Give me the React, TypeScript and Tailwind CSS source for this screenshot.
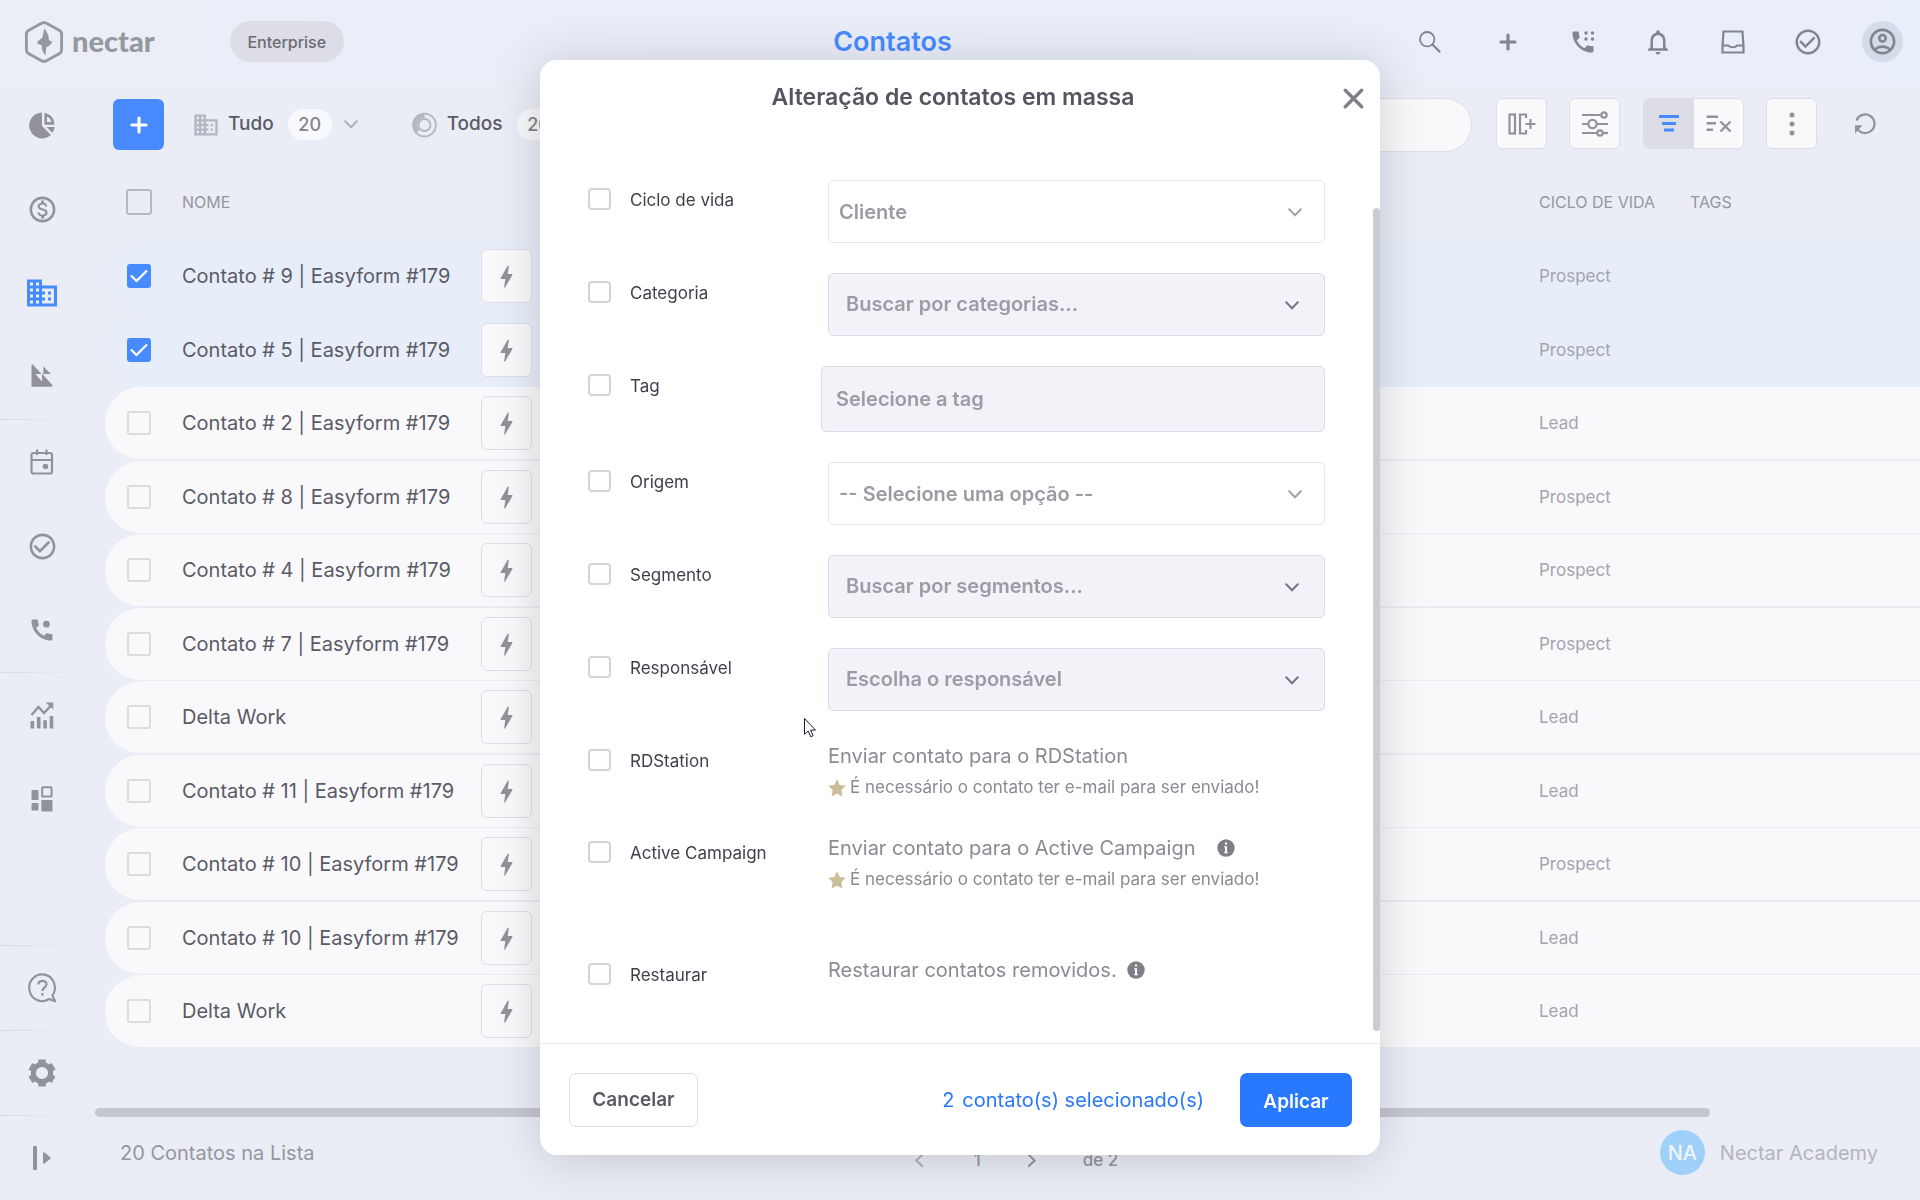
import React from 'react';
import {
  MdBolt,
  MdCheckCircleOutline,
  MdDomain,
  MdNotificationsNone,
  MdOutlineAccountCircle,
  MdOutlineMonetizationOn,
  MdPhone,
} from 'react-icons/md';

type Contact = { name: string; stage: string; selected?: boolean };

const contacts: Contact[] = [
  { name: 'Contato # 9 | Easyform #179', stage: 'Prospect', selected: true },
  { name: 'Contato # 5 | Easyform #179', stage: 'Prospect', selected: true },
  { name: 'Contato # 2 | Easyform #179', stage: 'Lead' },
  { name: 'Contato # 8 | Easyform #179', stage: 'Prospect' },
  { name: 'Contato # 4 | Easyform #179', stage: 'Prospect' },
  { name: 'Contato # 7 | Easyform #179', stage: 'Prospect' },
  { name: 'Delta Work', stage: 'Lead' },
  { name: 'Contato # 11 | Easyform #179', stage: 'Lead' },
  { name: 'Contato # 10 | Easyform #179', stage: 'Prospect' },
  { name: 'Contato # 10 | Easyform #179', stage: 'Lead' },
  { name: 'Delta Work', stage: 'Lead' },
];

/* ---------- icons ---------- */

const LogoMark = () => (
  <svg width="38" height="42" viewBox="0 0 38 42" fill="none" aria-hidden="true">
    <path
      d="M16.6 2.3a5 5 0 0 1 4.8 0l12.8 6.9a4.6 4.6 0 0 1 2.4 4v15.6a4.6 4.6 0 0 1-2.4 4l-12.8 6.9a5 5 0 0 1-4.8 0L3.8 32.8a4.6 4.6 0 0 1-2.4-4V13.200a4.6 4.6 0 0 1 2.4-4z"
      stroke="currentColor"
      strokeWidth="2.800"
    />
    <path d="M19.300 7.500c3.500 4.500 5 8 4.500 11.500l3.200 1.800c.4 1.500-2.200 4.200-5.800 5.400L20.500 34.500c-3-3.200-4.200-6.800-3.600-10.300L12.500 22.800c-1-1.300 1.500-4.300 4.700-5.800z" fill="currentColor" />
  </svg>
);

const PieIcon = () => (
  <svg width="26" height="27" viewBox="0 0 26 27" aria-hidden="true">
    <path d="M13 .5v13.400l9 9.200A13 13 0 1 1 13 .5z" fill="currentColor" />
    <path d="M16.700 2.500a10.500 10.500 0 0 1 7.300 8.900h-7.300z" fill="none" stroke="currentColor" strokeWidth="2.600" />
    <path d="M17.500 15h8.300a12 12 0 0 1-2.600 5.800z" fill="currentColor" />
  </svg>
);

const FunnelIcon = () => (
  <svg className="mb-1" width="22" height="23" viewBox="0 0 22 23" fill="currentColor" aria-hidden="true">
    <path d="M.5 1.800C.5.500 1.500.200 2.300 1l8.300 8.900H4.300l6.700 7.700v-7.700h1.200v1l9 9.900c.7.900.3 2-.8 2h-18.900c-.7 0-1-.4-1-1z" />
    <path d="M12.400 2.500l7.600 7.400h-7.600z" />
  </svg>
);

const CalendarIcon = () => (
  <svg width="24" height="26" viewBox="0 0 24 26" fill="none" stroke="currentColor" strokeWidth="2.200" aria-hidden="true">
    <rect x="1.500" y="4" width="20.500" height="20.500" rx="2" />
    <path d="M2 11h20M7 .5V6M16.500 .5V6" />
    <circle cx="15.500" cy="17.500" r="2.800" fill="currentColor" stroke="none" />
  </svg>
);

const CallDotIcon = () => (
  <svg width="28" height="28" viewBox="0 0 24 24" fill="currentColor" aria-hidden="true">
    <path d="M20.010 15.380c-1.230 0-2.420-.2-3.530-.56a.98.98 0 0 0-1.010.24l-1.570 1.970c-2.830-1.350-5.480-3.900-6.890-6.830l1.950-1.660c.27-.28.35-.67.24-1.020-.37-1.110-.56-2.300-.56-3.530 0-.54-.45-.99-.99-.99H4.190C3.650 3 3 3.240 3 3.990 3 13.280 10.730 21 20.010 21c.71 0 .99-.63.99-1.180v-3.450c0-.54-.45-.99-.99-.99z" />
    <circle cx="15.800" cy="7" r="2.900" />
  </svg>
);

const ChartIcon = () => (
  <svg width="24" height="27" viewBox="0 0 24 27" aria-hidden="true">
    <path d="M.5 19h3.600v7.500H.5zM6.900 15h3.600v11.500H6.900zM13.300 18.200h3.600v8.300h-3.600zM19.700 14h3.600v12.500h-3.600z" fill="currentColor" />
    <path d="M1.500 13L8.500 5l5.500 6L21.500 3" fill="none" stroke="currentColor" strokeWidth="2.400" />
    <path d="M15.500.5h7.800v7z" fill="currentColor" />
  </svg>
);

const WidgetsIcon = () => (
  <svg width="22" height="26" viewBox="0 0 22 26" fill="currentColor" aria-hidden="true">
    <rect x=".5" y="4" width="7" height="10" rx="1" />
    <rect x="11.200" y="1.200" width="9.400" height="9.400" rx=".5" fill="none" stroke="currentColor" strokeWidth="2" />
    <rect x=".5" y="17" width="7" height="7.500" rx="1" />
    <rect x="10.300" y="14" width="11.200" height="11.500" rx="1" />
  </svg>
);

const HelpBubbleIcon = () => (
  <svg width="29" height="30" viewBox="0 0 29 30" fill="none" stroke="currentColor" strokeWidth="2.200" aria-hidden="true">
    <path d="M24.500 22.500A12.800 13.400 0 1 0 21 26l6 2.300z" strokeLinejoin="round" />
    <path d="M10.300 11.500c.2-5 8.400-4.900 8.200 0-.1 2.800-4 3.100-4.100 6.500" />
    <path d="M14.400 20.200v2.500" strokeWidth="2.400" />
  </svg>
);

const GearIcon = () => (
  <svg width="28" height="28" viewBox="-14 -14 28 28" fill="none" stroke="currentColor" aria-hidden="true">
    <circle r="8.600" strokeWidth="5" />
    <path d="M0-9.500v-4M0 9.500v4M8.200-4.750l3.400-2M-8.200-4.750l-3.400-2M8.200 4.750l3.400 2M-8.200 4.750l-3.400 2" strokeWidth="7.500" />
  </svg>
);

const ExpandIcon = () => (
  <svg width="18" height="24" viewBox="0 0 18 24" fill="currentColor" aria-hidden="true">
    <rect x="0" y="0" width="4" height="24" rx="1" />
    <path d="M10 7.200c0-1 .8-1.200 1.500-.6l5.800 4.700c.5.4.5 1 0 1.400l-5.800 4.700c-.7.600-1.500.4-1.500-.6z" />
  </svg>
);

const SearchIcon = () => (
  <svg width="22" height="22" viewBox="0 0 22 22" fill="none" stroke="currentColor" aria-hidden="true">
    <circle cx="8.200" cy="8.200" r="7.200" strokeWidth="1.800" />
    <path d="M13.200 13.200l8 8" strokeWidth="2.200" />
  </svg>
);

const PlusIcon = () => (
  <svg width="18" height="18" viewBox="0 0 18 18" stroke="currentColor" strokeWidth="3.200" strokeLinecap="round" aria-hidden="true">
    <path d="M9 2v14M2 9h14" />
  </svg>
);

const DialIcon = () => (
  <span className="relative block">
    <MdPhone size={28} aria-hidden="true" />
    <svg className="absolute top-[3px] right-[2px]" width="11" height="11" viewBox="0 0 11 11" fill="currentColor" aria-hidden="true">
      <circle cx="2" cy="2" r="1.700" />
      <circle cx="8.500" cy="2" r="1.700" />
      <circle cx="2" cy="8" r="1.700" />
      <circle cx="8.500" cy="8" r="1.700" />
    </svg>
  </span>
);

const TrayIcon = () => (
  <svg width="24" height="24" viewBox="0 0 24 24" fill="none" stroke="currentColor" strokeWidth="2.200" aria-hidden="true">
    <path d="M2.500 1.500h19v.5l1 14v6.500h-21V16l1-14z" />
    <path d="M1.500 15.500h6c1.500 2.300 7 2.300 8.500 0h6.500" />
  </svg>
);

const ColumnsIcon = () => (
  <svg width="28" height="22" viewBox="0 0 28 22" fill="none" stroke="currentColor" strokeWidth="2.200" aria-hidden="true">
    <rect x="1.500" y="1.500" width="5.500" height="19" />
    <path d="M18 5V1.500h-6v19h6V17M22.500 6v10M17.500 11h10" />
  </svg>
);

const SlidersIcon = () => (
  <svg width="26" height="26" viewBox="0 0 26 26" fill="none" stroke="currentColor" strokeWidth="2.200" aria-hidden="true">
    <path d="M0 4h19M0 13h6M15 13h11M0 22h15" />
    <circle cx="22" cy="4" r="2.700" />
    <circle cx="10.500" cy="13" r="4.200" />
    <circle cx="18" cy="22" r="2.700" />
    <path d="M21 22h5" />
  </svg>
);

const FilterIcon = () => (
  <svg width="20" height="17" viewBox="0 0 20 17" fill="currentColor" aria-hidden="true">
    <path d="M0 0h20v3H0zM3 7h14v3H3zM5 13.500h10v3H5z" />
  </svg>
);

const ClearFilterIcon = () => (
  <svg width="26" height="18" viewBox="0 0 26 18" fill="none" stroke="currentColor" strokeWidth="2.400" aria-hidden="true">
    <path d="M.5 1.700H12M.5 8.200H10M.5 14.700H7M14.500 6.500l10 10M24.500 6.500l-10 10" />
  </svg>
);

const RefreshIcon = () => (
  <svg width="22" height="22" viewBox="0 0 22 22" fill="none" stroke="currentColor" strokeWidth="2.200" aria-hidden="true">
    <path d="M3.200 15.500A9.300 9.300 0 1 0 2.500 7.500" />
    <path d="M1 20.500v-8.300h7.500z" fill="currentColor" stroke="none" />
  </svg>
);

const RingIcon = () => (
  <svg width="25" height="26" viewBox="0 0 25 26" fill="none" stroke="currentColor" aria-hidden="true">
    <circle cx="12.500" cy="13" r="11.400" strokeWidth="1.800" />
    <circle cx="12.500" cy="13" r="6" strokeWidth="1.800" />
    <path d="M12.500 3.700A9.300 9.300 0 0 0 5.900 19.600" strokeWidth="4.600" />
  </svg>
);

const Chevron = ({ className }: { className?: string }) => (
  <svg className={className} width="14" height="9" viewBox="0 0 14 9" fill="none" stroke="currentColor" strokeWidth="2" strokeLinecap="round" aria-hidden="true">
    <path d="M1.200 1.200L7 7.200l5.800-6" />
  </svg>
);

const StarIcon = () => (
  <svg width="18" height="18" viewBox="0 0 18 18" fill="#cbbd97" aria-hidden="true">
    <path d="M9 .3l2.700 5.600 6 .8-4.400 4.300 1.100 6.500L9 14.600l-5.400 2.900L4.700 11 .3 6.700l6-.8z" />
  </svg>
);

const InfoIcon = () => (
  <svg width="18" height="18" viewBox="0 0 18 18" aria-hidden="true">
    <circle cx="9" cy="9" r="8.700" fill="#807f88" />
    <path d="M7.200 7.200h2.800v5.800h.8v1.200H7.200V13H8V8.400h-.8zM8 3.500h2v2H8z" fill="#fff" />
  </svg>
);

/* ---------- page ---------- */

function RailItem({ label, active, children }: { label: string; active?: boolean; children: React.ReactNode }) {
  return (
    <a
      href="#"
      aria-label={label}
      className={
        active
          ? 'flex h-[84px] items-center justify-center text-[#488bff]'
          : 'flex h-[84px] items-center justify-center text-[#92929b]'
      }
    >
      {children}
    </a>
  );
}

const RailRule = () => <div className="h-px w-[72px] bg-linear-to-r from-[#d9dae2] to-transparent" />;

function Rail() {
  return (
    <nav aria-label="Principal" className="flex w-[84px] shrink-0 flex-col">
      <RailItem label="Painel"><PieIcon /></RailItem>
      <RailItem label="Oportunidades"><MdOutlineMonetizationOn size={31} /></RailItem>
      <RailItem label="Contatos" active><MdDomain size={36} /></RailItem>
      <RailItem label="Funil"><FunnelIcon /></RailItem>
      <RailRule />
      <RailItem label="Agenda"><CalendarIcon /></RailItem>
      <RailItem label="Tarefas"><MdCheckCircleOutline size={31} /></RailItem>
      <RailItem label="Ligações"><CallDotIcon /></RailItem>
      <RailRule />
      <RailItem label="Relatórios"><ChartIcon /></RailItem>
      <RailItem label="Aplicativos"><WidgetsIcon /></RailItem>
      <div className="mt-auto">
        <RailRule />
        <RailItem label="Ajuda"><HelpBubbleIcon /></RailItem>
        <RailRule />
        <RailItem label="Configurações"><GearIcon /></RailItem>
        <RailRule />
        <RailItem label="Expandir menu"><ExpandIcon /></RailItem>
      </div>
    </nav>
  );
}

function TopBar() {
  return (
    <header className="grid h-[83px] grid-cols-[1fr_auto_1fr] items-center bg-linear-to-r from-[#ebedf7] to-[#e8eefa] pl-[25px]">
      <div className="flex items-center">
        <a href="#" className="flex items-center gap-[9px] text-[#97979e]">
          <LogoMark />
          <span className="pb-0.5 font-[Lato] text-[29px] leading-8 font-black">nectar</span>
        </a>
        <span className="ml-[75px] flex h-[41px] w-[114px] items-center justify-center rounded-full bg-[#dddde7] text-[16px] font-medium text-[#6b6b75]">
          Enterprise
        </span>
      </div>
      <h1 className="pr-40 text-[27px] leading-8 font-semibold text-[#488bff]">Contatos</h1>
      <div className="flex items-center justify-end text-[#84848d]">
        <button aria-label="Buscar" className="flex w-20 justify-center"><SearchIcon /></button>
        <button aria-label="Adicionar" className="flex w-[75px] justify-center"><PlusIcon /></button>
        <button aria-label="Discador" className="flex w-[75px] justify-center"><DialIcon /></button>
        <button aria-label="Notificações" className="flex w-[75px] justify-center"><MdNotificationsNone size={30} /></button>
        <button aria-label="Caixa de entrada" className="flex w-[75px] justify-center"><TrayIcon /></button>
        <button aria-label="Tarefas" className="flex w-[75px] justify-center"><MdCheckCircleOutline size={30} /></button>
        <button aria-label="Conta" className="flex w-[75px] justify-center">
          <span className="flex size-[41px] items-center justify-center rounded-full bg-[#d5dce9]">
            <MdOutlineAccountCircle size={31} />
          </span>
        </button>
      </div>
    </header>
  );
}

const Count = ({ children }: { children: React.ReactNode }) => (
  <span className="flex h-[31px] w-11 items-center justify-center rounded-full bg-[#f8f9fc] text-[18px] font-medium text-[#85858d]">
    {children}
  </span>
);

function Toolbar() {
  return (
    <div className="flex h-[83px] items-start pt-[15px] pl-[18px] text-[#92929b]">
      <div className="flex shrink-0 items-center pt-px">
        <button aria-label="Novo contato" className="flex size-[51px] shrink-0 items-center justify-center rounded-md bg-[#488bff] text-white">
          <PlusIcon />
        </button>
        <button className="ml-7 flex items-center text-[19px] font-medium text-[#5b5b66]">
          <MdDomain size={28} className="text-[#b4b6c1]" />
          <span className="ml-2">Tudo</span>
          <span className="ml-3.5"><Count>20</Count></span>
          <Chevron className="ml-3 text-[#b0b1bb]" />
        </button>
        <button className="ml-[54px] flex items-center text-[19px] font-medium text-[#5b5b66]">
          <span className="text-[#b4b6c1]"><RingIcon /></span>
          <span className="ml-2.5">Todos</span>
          <span className="ml-3.5"><Count>20</Count></span>
        </button>
      </div>
      <input
        type="search"
        aria-label="Pesquisar contatos"
        className="ml-16 h-[54px] min-w-0 flex-1 rounded-full border border-[#dddfe8] bg-[#f9f9fc] px-6"
      />
      <div className="ml-6 flex shrink-0 items-center">
        <button aria-label="Colunas" className="flex size-[51px] items-center justify-center rounded-md border border-[#dddde6] bg-[#f9f9fc]"><ColumnsIcon /></button>
        <button aria-label="Ajustes" className="ml-[22px] flex size-[51px] items-center justify-center rounded-md border border-[#dddde6] bg-[#f9f9fc]"><SlidersIcon /></button>
        <div className="ml-[23px] flex h-[51px] w-[101px] overflow-hidden rounded-md border border-[#dddde6] bg-[#f9f9fc]">
          <button aria-label="Filtrar" className="flex w-[50px] items-center justify-center bg-[#dddde7] text-[#488bff]"><FilterIcon /></button>
          <button aria-label="Limpar filtro" className="flex flex-1 items-center justify-center"><ClearFilterIcon /></button>
        </div>
        <button aria-label="Mais opções" className="ml-[22px] flex size-[51px] items-center justify-center rounded-md border border-[#dddde6] bg-[#f9f9fc]">
          <svg width="6" height="24" viewBox="0 0 6 24" fill="currentColor" aria-hidden="true">
            <circle cx="3" cy="3" r="2.500" />
            <circle cx="3" cy="12" r="2.500" />
            <circle cx="3" cy="21" r="2.500" />
          </svg>
        </button>
        <button aria-label="Atualizar" className="mr-11 ml-[37px] flex items-center justify-center"><RefreshIcon /></button>
      </div>
    </div>
  );
}

function RowCheck({ label, checked }: { label: string; checked?: boolean }) {
  return (
    <span className="grid size-6 place-items-center">
      <input
        type="checkbox"
        aria-label={label}
        defaultChecked={checked}
        className="peer col-start-1 row-start-1 size-6 appearance-none rounded-[3px] border-2 border-[#dcdce0] checked:border-[#488bff] checked:bg-[#488bff]"
      />
      <svg className="pointer-events-none col-start-1 row-start-1 hidden peer-checked:block" width="18" height="14" viewBox="0 0 18 14" fill="none" stroke="#fff" strokeWidth="2.200" aria-hidden="true">
        <path d="M1 6.500l5.500 5.500L17 1.500" />
      </svg>
    </span>
  );
}

function ContactsTable() {
  return (
    <table className="w-full table-fixed border-separate border-spacing-0 text-left">
      <colgroup>
        <col className="w-[77px]" />
        <col className="w-[299px]" />
        <col className="w-20" />
        <col />
        <col className="w-[151px]" />
        <col className="w-[230px]" />
      </colgroup>
      <thead>
        <tr className="h-[74px] text-[16px] text-[#96969f] *:pb-0.5">
          <th className="pl-[21px] font-normal">
            <input type="checkbox" aria-label="Selecionar todos" className="block size-[26px] appearance-none rounded-[3px] border-2 border-[#b6b8c4]" />
          </th>
          <th className="font-normal">NOME</th>
          <td />
          <td />
          <th className="font-normal">CICLO DE VIDA</th>
          <th className="font-normal">TAGS</th>
        </tr>
      </thead>
      <tbody>
        {contacts.map((c, i) => (
          <tr
            key={i}
            className={
              c.selected
                ? 'odd:h-[74px] even:h-[73px] *:border-[#e8eef8] *:bg-[#e7eefa] odd:*:border-b-2 even:*:border-b'
                : 'odd:h-[74px] even:h-[73px] *:border-[#eaedf6] *:bg-[#f9f9fc] odd:*:border-b-2 even:*:border-b'
            }
          >
            <td className="rounded-l-[36px] pl-[22px]"><RowCheck label={'Selecionar ' + c.name} checked={c.selected} /></td>
            <td className="text-[20px] text-[#5b5b66]">{c.name}</td>
            <td>
              <button aria-label="Ações rápidas" className="flex h-[54px] w-[51px] items-center justify-center rounded-md border border-[#dddde6] bg-[#f9f9fc] text-[#92929b]">
                <MdBolt size={29} />
              </button>
            </td>
            <td />
            <td className="pt-0.5 text-[17px] text-[#a4a4ae]">{c.stage}</td>
            <td />
          </tr>
        ))}
      </tbody>
    </table>
  );
}

function PageFooter() {
  return (
    <footer className="mt-auto">
      <div className="h-[9px] w-[88.5%] rounded-full bg-[#c6c6d0]" />
      <div className="flex h-[83px] items-center pr-[42px] pb-3 pl-[25px] text-[20px] text-[#96969f]">
        <p className="flex-1">20 Contatos na Lista</p>
        <div className="flex items-center pt-4 pl-8 text-[17px] font-medium">
          <button aria-label="Página anterior" className="text-[#b0b1bb]"><Chevron className="rotate-90" /></button>
          <span className="ml-12">1</span>
          <button aria-label="Próxima página" className="ml-11"><Chevron className="-rotate-90" /></button>
          <span className="ml-11">de 2</span>
        </div>
        <div className="flex flex-1 items-center justify-end gap-[15px] text-[#b4b4bc]">
          <span className="flex size-[45px] items-center justify-center rounded-full bg-[#9fd0fa] font-medium text-[#f1f6fd]">NA</span>
          <span>Nectar Academy</span>
        </div>
      </div>
    </footer>
  );
}

/* ---------- dialog ---------- */

function FormRow({ id, label, className, children }: { id: string; label: string; className: string; children: React.ReactNode }) {
  return (
    <div className={'grid grid-cols-[42px_198px_1fr] items-start ' + className}>
      <input id={id} type="checkbox" className="mt-2 block h-[22px] w-[23px] appearance-none rounded-[4px] border-2 border-[#d3d3da] bg-white" />
      <label htmlFor={id} className="mt-2 text-[17px] leading-6 text-[#3f3f4b]">{label}</label>
      {children}
    </div>
  );
}

const PlainSelect = ({ label, value }: { label: string; value: string }) => (
  <div className="relative">
    <select aria-label={label} className="block h-[63px] w-full appearance-none rounded-[5px] border border-[#e5e5eb] bg-white pl-2.5 text-[20px] font-semibold text-[#9b9ba3]">
      <option>{value}</option>
    </select>
    <Chevron className="pointer-events-none absolute top-7 right-[23px] text-[#a3a3ac]" />
  </div>
);

const SearchSelect = ({ label, value }: { label: string; value: string }) => (
  <div className="relative">
    <select aria-label={label} className="block h-[63px] w-full appearance-none rounded-[5px] border border-[#dbdde6] bg-[#f1f3f9] pb-0.5 pl-[17px] text-[20px] font-semibold text-[#9c9ca3]">
      <option>{value}</option>
    </select>
    <Chevron className="pointer-events-none absolute top-7 right-[26px] text-[#77777f]" />
  </div>
);

const EmailNote = () => (
  <p className="flex h-[34px] items-center gap-1 text-[17px] text-[#8a8a93]">
    <StarIcon />
    É necessário o contato ter e-mail para ser enviado!
  </p>
);

function BulkEditDialog() {
  return (
    <div className="fixed inset-0 flex items-start justify-center pt-[60px]">
      <section
        role="dialog"
        aria-labelledby="dialog-title"
        className="relative w-[840px] max-w-full rounded-[17px] bg-white shadow-[0_4px_48px_rgba(0,0,0,0.17)]"
      >
        <header className="relative flex h-[72px] items-center justify-center pr-[14px]">
          <h2 id="dialog-title" className="pt-0.5 text-[23px] leading-8 font-semibold text-[#555560]">Alteração de contatos em massa</h2>
          <button aria-label="Fechar" className="absolute top-7 right-4 text-[#807f88]">
            <svg width="21" height="21" viewBox="0 0 21 21" stroke="currentColor" strokeWidth="3.400" strokeLinecap="round" aria-hidden="true">
              <path d="M2.300 2.300l16.400 16.400M18.700 2.300L2.300 18.700" />
            </svg>
          </button>
        </header>

        <form id="bulk-form" className="relative border-b border-[#e8e8ed] pt-12 pr-[55px] pl-12">
          <FormRow id="f-stage" label="Ciclo de vida" className="min-h-[93px]">
            <PlainSelect label="Valor do ciclo de vida" value="Cliente" />
          </FormRow>
          <FormRow id="f-category" label="Categoria" className="min-h-[93px]">
            <SearchSelect label="Valor da categoria" value="Buscar por categorias..." />
          </FormRow>
          <FormRow id="f-tag" label="Tag" className="min-h-24">
            <input
              aria-label="Valor da tag"
              placeholder="Selecione a tag"
              className="-ml-[7px] block h-[66px] rounded-[5px] border border-[#dbdde6] bg-[#f1f3f9] pl-3.5 text-[20px] font-semibold text-[#9c9ca3] placeholder:text-[#9c9ca3]"
            />
          </FormRow>
          <FormRow id="f-source" label="Origem" className="min-h-[93px]">
            <PlainSelect label="Valor da origem" value="-- Selecione uma opção --" />
          </FormRow>
          <FormRow id="f-segment" label="Segmento" className="min-h-[93px]">
            <SearchSelect label="Valor do segmento" value="Buscar por segmentos..." />
          </FormRow>
          <FormRow id="f-owner" label="Responsável" className="min-h-[93px]">
            <SearchSelect label="Valor do responsável" value="Escolha o responsável" />
          </FormRow>
          <FormRow id="f-rd" label="RDStation" className="min-h-[92px]">
            <div>
              <p className="text-[20px] leading-[30px] text-[#8a8a93]">Enviar contato para o RDStation</p>
              <EmailNote />
            </div>
          </FormRow>
          <FormRow id="f-ac" label="Active Campaign" className="min-h-[122px]">
            <div>
              <p className="flex items-center gap-[22px] text-[20px] leading-[30px] text-[#8a8a93]">
                Enviar contato para o Active Campaign
                <InfoIcon />
              </p>
              <EmailNote />
            </div>
          </FormRow>
          <FormRow id="f-restore" label="Restaurar" className="min-h-[88px]">
            <p className="flex items-center gap-2.5 text-[20px] leading-[30px] text-[#8a8a93]">
              Restaurar contatos removidos.
              <InfoIcon />
            </p>
          </FormRow>
          <div className="absolute top-[76px] right-0 bottom-3 w-[7px] rounded-full bg-[#cbcbd2]" />
        </form>

        <footer className="flex items-center pt-[29px] pr-7 pb-7 pl-[29px]">
          <button type="button" className="h-[54px] w-[129px] rounded-[7px] border border-[#dcdce6] text-[19px] font-semibold text-[#5a5a64]">
            Cancelar
          </button>
          <p className="ml-auto flex gap-2 text-[20px] text-[#2979ff]">
            <span>2</span>
            <span>contato(s) selecionado(s)</span>
          </p>
          <button form="bulk-form" type="button" className="ml-9 h-[54px] w-28 rounded-[7px] bg-[#2979ff] pt-1 text-[19px] font-semibold text-white">
            Aplicar
          </button>
        </footer>

        <svg className="pointer-events-none absolute top-[657px] left-[263px]" width="14" height="21" viewBox="0 0 14 21" aria-hidden="true">
          <path d="M1.500 1.500v15.700l3.700-3.200 2.500 5.700 2.400-1-2.500-5.600h4.900z" fill="#fff" stroke="#1d1d2c" strokeWidth="1" />
        </svg>
      </section>
    </div>
  );
}

export default function App() {
  return (
    <div className="flex min-h-screen flex-col overflow-hidden bg-[#eaedf6] font-[Inter,sans-serif]">
      <TopBar />
      <div className="flex flex-1">
        <Rail />
        <main className="ml-[11px] flex min-w-0 flex-1 flex-col">
          <Toolbar />
          <div className="pl-2.5">
            <ContactsTable />
          </div>
          <PageFooter />
        </main>
      </div>
      <BulkEditDialog />
    </div>
  );
}
